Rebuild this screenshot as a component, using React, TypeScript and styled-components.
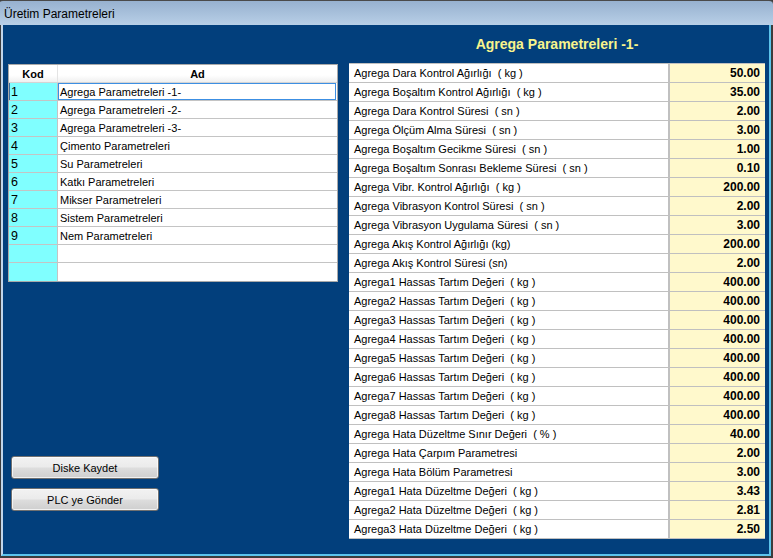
import React from "react";
import styled, { createGlobalStyle } from "styled-components";

const Global = createGlobalStyle`
  html, body { margin: 0; padding: 0; background: #3a3a3a; }
  body { font-family: "Liberation Sans", Arial, sans-serif; }
  * { box-sizing: border-box; }
`;

const Window = styled.div`
  width: 773px;
  height: 558px;
  background: #3c3c3c;
  padding: 0 2px 2px 1px;
  display: flex;
  flex-direction: column;
  overflow: hidden;
`;

const Frame = styled.div`
  flex: 1;
  display: flex;
  flex-direction: column;
  border-left: 2px solid #c3d6ea;
  border-right: 2px solid #5cc4ec;
  border-bottom: 2px solid #5cc4ec;
  min-height: 0;
`;

const TitleBar = styled.div`
  height: 25px;
  flex: none;
  background: linear-gradient(#97b1cf, #b8cfe7);
  border-top: 1px solid #4a4a4a;
  border-top-left-radius: 4px;
  border-top-right-radius: 4px;
  display: flex;
  align-items: center;
  padding-left: 5px;
  padding-top: 1px;
  font-size: 12px;
  color: #000;
  margin-left: -2px;
  margin-right: -2px;
  padding-right: 2px;
`;

const Client = styled.div`
  flex: 1;
  background: #023f7c;
  display: grid;
  grid-template-columns: 330px 416px;
  column-gap: 11px;
  padding-left: 5px;
  min-height: 0;
`;

const LeftCol = styled.div`
  display: flex;
  flex-direction: column;
  padding-top: 39px;
  padding-bottom: 43px;
`;

const RightCol = styled.div`
  display: flex;
  flex-direction: column;
  padding-top: 11px;
`;

const Heading = styled.div`
  color: #f8f48c;
  font-weight: bold;
  font-size: 14px;
  line-height: 16px;
  text-align: center;
  margin-bottom: 11px;
`;

const ListTable = styled.div`
  width: 330px;
  border: 1px solid #a9a9a9;
  background: #fff;
  display: flex;
  flex-direction: column;
`;

const ListRow = styled.div`
  display: grid;
  grid-template-columns: 49px 1fr;
  height: 18px;
  border-bottom: 1px solid #c4c4c4;
  &:last-child { border-bottom: none; }
`;

const HeadRow = styled(ListRow)`
  background: linear-gradient(#ffffff 60%, #f0f0f0);
  border-bottom: 1px solid #d4d4d4;
`;

const HeadCell = styled.div`
  font-weight: bold;
  font-size: 11px;
  display: flex;
  align-items: center;
  justify-content: center;
  border-right: 1px solid #e4e4e4;
  &:last-child { border-right: none; }
`;

const KodCell = styled.div<{ $focus?: boolean }>`
  background: #80ffff;
  border-right: 1px solid #c4c4c4;
  font-size: 12.5px;
  display: flex;
  align-items: center;
  border-left: ${(p) => (p.$focus ? "1px solid #3a6d9e" : "none")};
  padding-left: ${(p) => (p.$focus ? "1px" : "2px")};
`;

const AdCell = styled.div<{ $focus?: boolean }>`
  font-size: 11px;
  display: flex;
  align-items: center;
  padding-left: ${(p) => (p.$focus ? "1px" : "2px")};
  border: ${(p) => (p.$focus ? "1px solid #3c8fe3" : "none")};
  margin-right: ${(p) => (p.$focus ? "1px" : "0")};
`;

const Buttons = styled.div`
  margin-top: auto;
  padding-left: 3px;
  display: flex;
  flex-direction: column;
  gap: 9px;
`;

const Button = styled.button`
  width: 148px;
  height: 23px;
  border: 1px solid #707070;
  border-radius: 3px;
  background: linear-gradient(#f2f2f2, #ebebeb 48%, #dddddd 52%, #cfcfcf);
  box-shadow: inset 0 0 0 1px rgba(255, 255, 255, 0.7);
  font-family: "Liberation Sans", Arial, sans-serif;
  font-size: 11px;
  color: #000;
  padding: 0;
`;

const ParamTable = styled.div`
  width: 416px;
  border-top: 1px solid #c0c0c0;
  background: #fff;
`;

const ParamRow = styled.div`
  display: grid;
  grid-template-columns: 321px 1fr;
  height: 19px;
  border-bottom: 1px solid #c0c0c0;
`;

const Label = styled.div`
  font-size: 11px;
  white-space: pre;
  display: flex;
  align-items: center;
  padding-left: 5px;
  border-right: 2px solid #c0c0c0;
  background: #fff;
`;

const Value = styled.div`
  background: #fff9cc;
  font-weight: bold;
  font-size: 12px;
  display: flex;
  align-items: center;
  justify-content: flex-end;
  padding-right: 5px;
`;

const listItems: [string, string][] = [
  ["1", "Agrega Parametreleri -1-"],
  ["2", "Agrega Parametreleri -2-"],
  ["3", "Agrega Parametreleri -3-"],
  ["4", "Çimento Parametreleri"],
  ["5", "Su Parametreleri"],
  ["6", "Katkı Parametreleri"],
  ["7", "Mikser Parametreleri"],
  ["8", "Sistem Parametreleri"],
  ["9", "Nem Parametreleri"],
  ["", ""],
  ["", ""],
];

const params: [string, string][] = [
  ["Agrega Dara Kontrol Ağırlığı  ( kg )", "50.00"],
  ["Agrega Boşaltım Kontrol Ağırlığı  ( kg )", "35.00"],
  ["Agrega Dara Kontrol Süresi  ( sn )", "2.00"],
  ["Agrega Ölçüm Alma Süresi  ( sn )", "3.00"],
  ["Agrega Boşaltım Gecikme Süresi  ( sn )", "1.00"],
  ["Agrega Boşaltım Sonrası Bekleme Süresi  ( sn )", "0.10"],
  ["Agrega Vibr. Kontrol Ağırlığı  ( kg )", "200.00"],
  ["Agrega Vibrasyon Kontrol Süresi  ( sn )", "2.00"],
  ["Agrega Vibrasyon Uygulama Süresi  ( sn )", "3.00"],
  ["Agrega Akış Kontrol Ağırlığı (kg)", "200.00"],
  ["Agrega Akış Kontrol Süresi (sn)", "2.00"],
  ["Agrega1 Hassas Tartım Değeri  ( kg )", "400.00"],
  ["Agrega2 Hassas Tartım Değeri  ( kg )", "400.00"],
  ["Agrega3 Hassas Tartım Değeri  ( kg )", "400.00"],
  ["Agrega4 Hassas Tartım Değeri  ( kg )", "400.00"],
  ["Agrega5 Hassas Tartım Değeri  ( kg )", "400.00"],
  ["Agrega6 Hassas Tartım Değeri  ( kg )", "400.00"],
  ["Agrega7 Hassas Tartım Değeri  ( kg )", "400.00"],
  ["Agrega8 Hassas Tartım Değeri  ( kg )", "400.00"],
  ["Agrega Hata Düzeltme Sınır Değeri  ( % )", "40.00"],
  ["Agrega Hata Çarpım Parametresi", "2.00"],
  ["Agrega Hata Bölüm Parametresi", "3.00"],
  ["Agrega1 Hata Düzeltme Değeri  ( kg )", "3.43"],
  ["Agrega2 Hata Düzeltme Değeri  ( kg )", "2.81"],
  ["Agrega3 Hata Düzeltme Değeri  ( kg )", "2.50"],
];

export default function App() {
  return (
    <>
      <Global />
      <Window>
        <TitleBar>Üretim Parametreleri</TitleBar>
        <Frame>
          <Client>
            <LeftCol>
              <ListTable>
                <HeadRow>
                  <HeadCell>Kod</HeadCell>
                  <HeadCell>Ad</HeadCell>
                </HeadRow>
                {listItems.map(([k, a], i) => (
                  <ListRow key={i}>
                    <KodCell $focus={i === 0}>{k}</KodCell>
                    <AdCell $focus={i === 0}>{a}</AdCell>
                  </ListRow>
                ))}
              </ListTable>
              <Buttons>
                <Button>Diske Kaydet</Button>
                <Button>PLC ye Gönder</Button>
              </Buttons>
            </LeftCol>
            <RightCol>
              <Heading>Agrega Parametreleri -1-</Heading>
              <ParamTable>
                {params.map(([l, v], i) => (
                  <ParamRow key={i}>
                    <Label>{l}</Label>
                    <Value>{v}</Value>
                  </ParamRow>
                ))}
              </ParamTable>
            </RightCol>
          </Client>
        </Frame>
      </Window>
    </>
  );
}
